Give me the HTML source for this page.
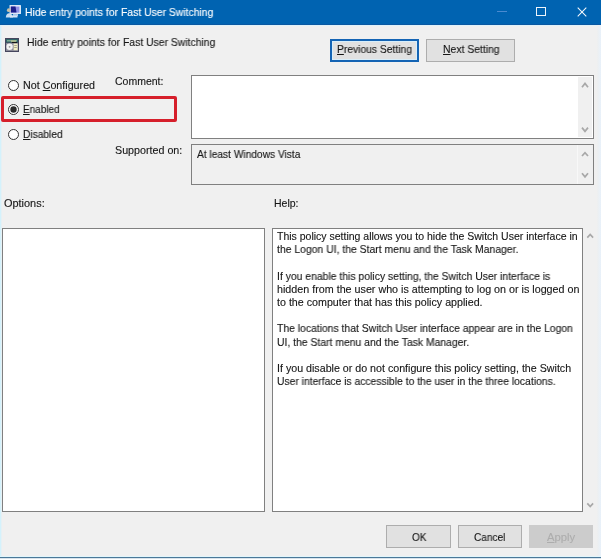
<!DOCTYPE html>
<html><head><meta charset="utf-8">
<style>
*{margin:0;padding:0;box-sizing:border-box}
html,body{width:601px;height:559px;overflow:hidden;background:#f0f0f0}
body{position:relative;font-family:"Liberation Sans",sans-serif;font-size:10.5px;color:#000}
.a{position:absolute}
.t{position:absolute;white-space:nowrap;line-height:13px;transform-origin:0 0;will-change:transform;-webkit-text-stroke:0.12px currentColor;color:#161616}
.box{position:absolute;border:1px solid #808080;background:#fff}
.btn{position:absolute;background:#e1e1e1;border:1px solid #adadad}
u{text-decoration:underline}
</style></head><body>
<!-- title bar -->
<div class="a" style="left:0;top:0;width:601px;height:24px;background:#0063b1"></div>
<div class="a" style="left:0;top:24px;width:601px;height:1px;background:#0a58a2"></div>
<div class="a" style="left:0;top:25px;width:601px;height:1px;background:#dff2fa"></div>
<!-- window edges -->
<div class="a" style="left:0;top:25px;width:1px;height:532px;background:#d4f2fc"></div>
<div class="a" style="left:1px;top:25px;width:1px;height:532px;background:#e6f0f4"></div>
<div class="a" style="left:597px;top:25px;width:4px;height:532px;background:linear-gradient(90deg,#eeefef,#e8f1fa)"></div>
<div class="a" style="left:0;top:556px;width:601px;height:1px;background:#e2f6fc"></div>
<div class="a" style="left:0;top:557px;width:601px;height:1px;background:#4a7898"></div>
<div class="a" style="left:0;top:558px;width:601px;height:1px;background:#d8e2ea"></div>

<svg class="a" style="left:4px;top:2px" width="20" height="20" viewBox="0 0 20 20">
<rect x="5.5" y="3" width="11.5" height="9" fill="#dce8f8" rx="0.5"/>
<rect x="6.8" y="4.6" width="8.6" height="6" fill="#8f90e6"/>
<path d="M6.8 4.6H11.5L12.5 10.6H6.8Z" fill="#1c1f8c"/>
<rect x="9" y="12" width="5" height="2" fill="#a8c4e8"/>
<circle cx="4.8" cy="8.2" r="1.9" fill="#c8c0a8"/>
<path d="M1.8 15.5C2 12.5 3.5 11.3 5 11.3C6.8 11.3 8.5 12.5 9 15.5Z" fill="#c8dcf0"/>
<rect x="6" y="13.5" width="7.5" height="2" fill="#d8e6f6"/>
</svg>
<svg class="a" style="left:5px;top:38px" width="14" height="14" viewBox="0 0 14 14">
<rect x="0" y="0" width="14" height="14" fill="#46465e"/>
<rect x="1" y="1" width="12" height="3.5" fill="#2f6468"/>
<rect x="2" y="2" width="10" height="1.5" fill="#7fa890"/>
<rect x="6" y="2.5" width="5" height="1.2" fill="#c8c890"/>
<rect x="7" y="4" width="5" height="1" fill="#151515"/>
<rect x="1" y="5" width="12" height="8" fill="#8a8a98"/>
<circle cx="4.6" cy="8.8" r="3.2" fill="#f2f2f2"/>
<circle cx="4.6" cy="8.8" r="0.9" fill="#9a9a9a"/>
<rect x="8.6" y="5.6" width="4" height="6.6" fill="#f4f0c4"/>
<rect x="9.2" y="7" width="2.6" height="1" fill="#a8a890"/>
<rect x="9.2" y="9" width="2.6" height="1" fill="#a8a890"/>
</svg>

<!-- title text -->
<div class="t" style="left:25px;top:6px;color:#fff;transform:scaleX(0.99)">Hide entry points for Fast User Switching</div>
<!-- window controls -->
<div class="a" style="left:497px;top:11px;width:10px;height:1px;background:#4a8ad0"></div>
<div class="a" style="left:536px;top:7px;width:10px;height:9px;border:1px solid #eef4fa"></div>
<svg class="a" style="left:577px;top:7px" width="10" height="10" viewBox="0 0 10 10"><path d="M0.7 0.7L9.3 9.3M9.3 0.7L0.7 9.3" stroke="#f4f8fc" stroke-width="1.05"/></svg>

<!-- header text -->
<div class="t" style="left:26.5px;top:36px;transform:scaleX(0.99)">Hide entry points for Fast User Switching</div>

<!-- prev / next buttons -->
<div class="btn" style="left:330px;top:39px;width:89px;height:23px;border:2px solid #1464b4;box-shadow:inset 0 0 0 1px #d8eefa"></div>
<div class="t" style="left:337px;top:43px;transform:scaleX(0.98)"><u>P</u>revious Setting</div>
<div class="btn" style="left:426px;top:39px;width:89px;height:23px"></div>
<div class="t" style="left:442.5px;top:43px;transform:scaleX(0.99)"><u>N</u>ext Setting</div>

<!-- radios -->
<svg class="a" style="left:7px;top:78.5px" width="13" height="13" viewBox="0 0 13 13"><circle cx="6.5" cy="6.5" r="5" fill="#fff" stroke="#333" stroke-width="1"/></svg>
<svg class="a" style="left:7px;top:103px" width="13" height="13" viewBox="0 0 13 13"><circle cx="6.5" cy="6.5" r="5" fill="#fff" stroke="#333" stroke-width="1"/><circle cx="6.5" cy="6.5" r="3.2" fill="#2a2a2a"/></svg>
<svg class="a" style="left:7px;top:127.5px" width="13" height="13" viewBox="0 0 13 13"><circle cx="6.5" cy="6.5" r="5" fill="#fff" stroke="#333" stroke-width="1"/></svg>
<div class="t" style="left:23px;top:79px;transform:scaleX(1.02)">Not <u>C</u>onfigured</div>
<div class="t" style="left:23px;top:103px;transform:scaleX(0.95)"><u>E</u>nabled</div>
<div class="t" style="left:23px;top:127.5px;transform:scaleX(0.97)"><u>D</u>isabled</div>

<!-- red highlight -->
<div class="a" style="left:1px;top:96px;width:176px;height:26px;border:3px solid #d61f2b;border-radius:2px"></div>

<!-- labels -->
<div class="t" style="left:115px;top:74.5px">Comment:</div>
<div class="t" style="left:115px;top:143.5px;transform:scaleX(1.02)">Supported on:</div>
<div class="t" style="left:4px;top:197px;transform:scaleX(1.04)">Options:</div>
<div class="t" style="left:274px;top:197px">Help:</div>

<!-- comment box -->
<div class="box" style="left:191px;top:75px;width:403px;height:64px"></div>
<div class="a" style="left:578px;top:77px;width:14px;height:60px;background:#f0f0f0"></div>
<!-- supported box -->
<div class="box" style="left:191px;top:144px;width:403px;height:41px;background:#f0f0f0"></div>
<div class="a" style="left:577px;top:145px;width:1px;height:39px;background:#f8f8f8"></div>
<div class="t" style="left:196.5px;top:147.5px;transform:scaleX(0.97)">At least Windows Vista</div>

<!-- options box -->
<div class="box" style="left:2px;top:228px;width:263px;height:284px"></div>
<!-- help box -->
<div class="box" style="left:272px;top:228px;width:311px;height:284px"></div>
<div id="help">
<div class="t" style="left:277px;top:230px">This policy setting allows you to hide the Switch User interface in</div>
<div class="t" style="left:277px;top:243px;transform:scaleX(0.99)">the Logon UI, the Start menu and the Task Manager.</div>
<div class="t" style="left:277px;top:269.8px;transform:scaleX(0.99)">If you enable this policy setting, the Switch User interface is</div>
<div class="t" style="left:277px;top:282.9px;transform:scaleX(1.022)">hidden from the user who is attempting to log on or is logged on</div>
<div class="t" style="left:277px;top:296px;transform:scaleX(1.018)">to the computer that has this policy applied.</div>
<div class="t" style="left:277px;top:322.2px;transform:scaleX(0.988)">The locations that Switch User interface appear are in the Logon</div>
<div class="t" style="left:277px;top:335.6px;transform:scaleX(0.99)">UI, the Start menu and the Task Manager.</div>
<div class="t" style="left:277px;top:361.5px;transform:scaleX(1.016)">If you disable or do not configure this policy setting, the Switch</div>
<div class="t" style="left:277px;top:374.6px;transform:scaleX(0.984)">User interface is accessible to the user in the three locations.</div>
</div>

<svg class="a" style="left:0;top:0" width="601" height="559" viewBox="0 0 601 559">
<g fill="none" stroke="#a8a8a8" stroke-width="1.7">
<path d="M582 87.2L585 83.4L588 87.2"/>
<path d="M582 127.6L585 131.4L588 127.6"/>
<path d="M582 156L585 152.7L588 156"/>
<path d="M582 173.3L585 176.9L588 173.3"/>
<path d="M587.3 237.6L590.2 234.4L593.1 237.6"/>
<path d="M587.3 503.4L590.2 506.6L593.1 503.4"/>
</g>
</svg>

<!-- bottom buttons -->
<div class="btn" style="left:386px;top:525px;width:65px;height:23px"></div>
<div class="t" style="left:412px;top:531px;transform:scaleX(0.95)">OK</div>
<div class="btn" style="left:458px;top:525px;width:64px;height:23px"></div>
<div class="t" style="left:474px;top:531px;transform:scaleX(0.96)">Cancel</div>
<div class="btn" style="left:529px;top:525px;width:64px;height:23px;background:#cccccc;border-color:#cccccc"></div>
<div class="t" style="left:547px;top:531px;color:#adadad;transform:scaleX(1.07)"><u>A</u>pply</div>
</body></html>
